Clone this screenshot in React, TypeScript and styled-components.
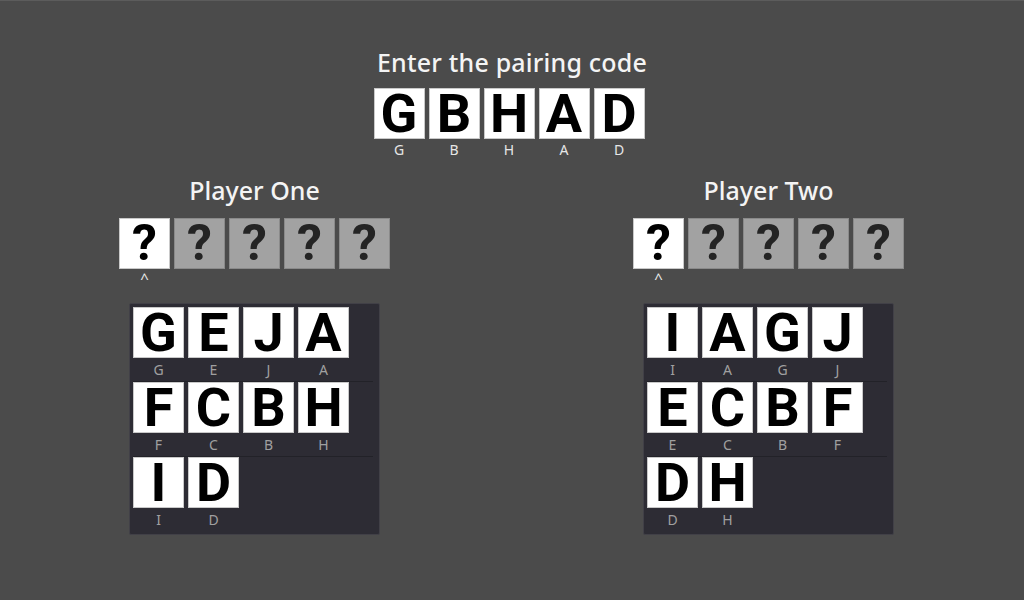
import React from "react";
import styled, { createGlobalStyle } from "styled-components";

const GlobalStyle = createGlobalStyle`
  html, body {
    margin: 0;
    padding: 0;
    background: #4b4b4b;
  }
  body {
    font-family: "Noto Sans", Roboto, "DejaVu Sans", sans-serif;
    overflow: hidden;
  }
  * { box-sizing: border-box; }
`;

const Page = styled.div`
  width: 1024px;
  height: 600px;
  background: #4b4b4b;
  border-top: 1px solid #5c5c5c;
  display: flex;
  flex-direction: column;
  align-items: stretch;
  padding-top: 46px;
`;

const CodeSection = styled.section`
  display: flex;
  flex-direction: column;
  align-items: center;
`;

const Title = styled.h1`
  margin: 0;
  font-family: "Noto Sans", Roboto, sans-serif;
  font-size: 25px;
  line-height: 30px;
  font-weight: 500;
  color: #f4f4f4;
  letter-spacing: 0.2px;
`;

const TileRow = styled.div`
  display: flex;
  gap: 4px;
  margin-top: 11px;
  padding-right: 6px;
`;

const Slot = styled.div`
  display: flex;
  flex-direction: column;
  align-items: center;
  width: 51px;
`;

const Tile = styled.div<{ $variant?: "white" | "gray" }>`
  width: 51px;
  height: 51px;
  display: flex;
  align-items: center;
  justify-content: center;
  background: ${(p) => (p.$variant === "gray" ? "#a2a2a2" : "#ffffff")};
  border: 1px solid ${(p) => (p.$variant === "gray" ? "#8a8a8a" : "#c9c9c9")};
  color: ${(p) => (p.$variant === "gray" ? "#242424" : "#000000")};
  font-family: Roboto, "Noto Sans", sans-serif;
  font-weight: 700;
  font-size: 54px;
  line-height: 49px;
`;

const QuestionMark = styled.span`
  font-size: 50px;
  line-height: 49px;
  font-weight: 700;
`;

const CodeLabel = styled.div`
  margin-top: 2px;
  font-size: 14px;
  line-height: 18px;
  color: #e6e6e6;
  height: 18px;
`;

const Caret = styled.div`
  margin-top: 1px;
  font-size: 15px;
  line-height: 16px;
  height: 16px;
  color: #ececec;
`;

const Players = styled.div`
  display: grid;
  grid-template-columns: 509px 509px;
  column-gap: 5px;
  margin-top: 15px;
`;

const PlayerColumn = styled.section`
  display: flex;
  flex-direction: column;
  align-items: center;
`;

const PlayerTitle = styled.h2`
  margin: 0;
  font-family: "Noto Sans", Roboto, sans-serif;
  font-size: 25px;
  line-height: 32px;
  font-weight: 500;
  color: #f4f4f4;
`;

const PlayerTiles = styled.div`
  display: flex;
  gap: 4px;
  margin-top: 12px;
`;

const Panel = styled.div`
  margin-top: 17px;
  width: 251px;
  background: #2d2c34;
  border: 1px solid #414047;
  border-radius: 2px;
  padding: 3px;
  display: flex;
  flex-direction: column;
`;

const PanelRow = styled.div<{ $last?: boolean }>`
  width: 240px;
  height: ${(p) => (p.$last ? 74 : 75)}px;
  display: flex;
  gap: 4px;
  border-bottom: ${(p) => (p.$last ? "none" : "1px solid #222228")};
`;

const PanelLabel = styled.div`
  font-size: 14px;
  line-height: 23px;
  height: 23px;
  color: #a0a0a0;
`;

const code = ["G", "B", "H", "A", "D"];

const players = [
  {
    name: "Player One",
    rows: [
      ["G", "E", "J", "A"],
      ["F", "C", "B", "H"],
      ["I", "D"],
    ],
  },
  {
    name: "Player Two",
    rows: [
      ["I", "A", "G", "J"],
      ["E", "C", "B", "F"],
      ["D", "H"],
    ],
  },
];

export default function App() {
  return (
    <>
      <GlobalStyle />
      <Page>
        <CodeSection>
          <Title>Enter the pairing code</Title>
          <TileRow>
            {code.map((c, i) => (
              <Slot key={i}>
                <Tile>{c}</Tile>
                <CodeLabel>{c}</CodeLabel>
              </Slot>
            ))}
          </TileRow>
        </CodeSection>
        <Players>
          {players.map((p) => (
            <PlayerColumn key={p.name}>
              <PlayerTitle>{p.name}</PlayerTitle>
              <PlayerTiles>
                {[0, 1, 2, 3, 4].map((i) => (
                  <Slot key={i}>
                    <Tile $variant={i === 0 ? "white" : "gray"}>
                      <QuestionMark>?</QuestionMark>
                    </Tile>
                    <Caret>{i === 0 ? "^" : ""}</Caret>
                  </Slot>
                ))}
              </PlayerTiles>
              <Panel>
                {p.rows.map((row, ri) => (
                  <PanelRow key={ri} $last={ri === p.rows.length - 1}>
                    {row.map((c) => (
                      <Slot key={c}>
                        <Tile>{c}</Tile>
                        <PanelLabel>{c}</PanelLabel>
                      </Slot>
                    ))}
                  </PanelRow>
                ))}
              </Panel>
            </PlayerColumn>
          ))}
        </Players>
      </Page>
    </>
  );
}
